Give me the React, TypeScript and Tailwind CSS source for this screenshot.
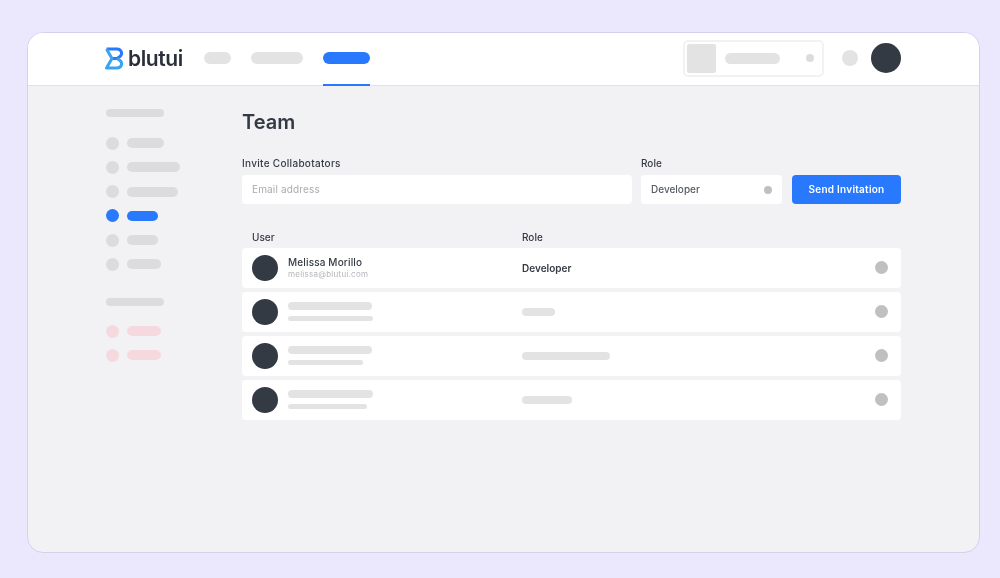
const sidebarMain = [
  { width: "w-[37px]", active: false },
  { width: "w-[53px]", active: false },
  { width: "w-[51px]", active: false },
  { width: "w-[31px]", active: true },
  { width: "w-[31px]", active: false },
  { width: "w-[34px]", active: false },
];

const rows = [
  { name: "w-[84px]", email: "w-[85px]", role: "w-[33px]" },
  { name: "w-[84px]", email: "w-[75px]", role: "w-[88px]" },
  { name: "w-[85px]", email: "w-[79px]", role: "w-[50px]" },
];

const Logo = () => (
  <svg width="18" height="23" viewBox="0 0 18 23" fill="none" strokeWidth="3" strokeLinejoin="round">
    <path d="M1.5 2H12C16.5 2 18 7 15 9.5L12 11.5H7" stroke="#2979ff" />
    <path d="M1.5 2L7 11.5L1.5 21H12C16.5 21 18 16 15 13.5L12 11.5" stroke="#38a3f1" />
  </svg>
);

const Avatar = () => <div className="size-[26px] shrink-0 rounded-full bg-[#343a44]" />;

export default function App() {
  return (
    <div className="h-[578px] w-[1000px] overflow-hidden bg-[#ebe8fd] px-[27px] pt-[32px] font-['Inter',sans-serif] blur-[0.4px]">
      <div className="flex h-[521px] w-[953px] flex-col overflow-hidden rounded-[16px] border border-[#d5d1ec] bg-[#f2f2f5]">
        {/* Header */}
        <header className="flex h-[53px] shrink-0 items-center border-b border-[#e2e2e4] bg-white pb-[2px] pl-[77px] pr-[78px]">
          <div className="flex items-center gap-[5px]">
            <Logo />
            <span className="w-[55px] text-[21px] font-semibold leading-none tracking-[-0.4px] text-[#2a2f3a]">blutui</span>
          </div>
          <div className="ml-[21px] h-[12px] w-[27px] rounded-full bg-[#e3e3e3]" />
          <div className="ml-[20px] h-[12px] w-[52px] rounded-full bg-[#e3e3e3]" />
          <div className="relative ml-[20px] h-[12px] w-[47px] rounded-full bg-[#2979ff]">
            <div className="absolute left-0 top-[32px] h-[2px] w-[47px] bg-[#2979ff]" />
          </div>
          <div className="ml-auto flex h-[37px] w-[141px] items-center rounded-[5px] border-2 border-[#f2f2f2] p-[2px]">
            <div className="size-[29px] rounded-[2px] bg-[#e3e3e3]" />
            <div className="ml-[9px] h-[11px] w-[55px] rounded-full bg-[#e3e3e3]" />
            <div className="ml-[26px] size-[8px] rounded-full bg-[#dcdcdc]" />
          </div>
          <div className="ml-[18px] size-[16px] rounded-full bg-[#e3e3e3]" />
          <div className="ml-[13px] size-[30px] rounded-full bg-[#343a44]" />
        </header>

        <div className="flex flex-1">
          {/* Sidebar */}
          <aside className="w-[214px] shrink-0 pl-[78px] pt-[23px]">
            <div className="h-[8px] w-[58px] rounded-full bg-[#dcdcdf]" />
            <div className="mt-[19.5px] flex flex-col gap-[11.3px]">
              {sidebarMain.map((item, i) => (
                <div key={i} className="flex h-[13px] items-center gap-[8px]">
                  <div className={`size-[13px] rounded-full ${item.active ? "bg-[#2979ff]" : "bg-[#dcdcdf]"}`} />
                  <div className={`h-[10px] rounded-full ${item.width} ${item.active ? "bg-[#2979ff]" : "bg-[#dcdcdf]"}`} />
                </div>
              ))}
            </div>
            <div className="mt-[27px] h-[8px] w-[58px] rounded-full bg-[#dcdcdf]" />
            <div className="mt-[19px] flex flex-col gap-[11px]">
              {[0, 1].map((i) => (
                <div key={i} className="flex h-[13px] items-center gap-[8px]">
                  <div className="size-[13px] rounded-full bg-[#f6d9de]" />
                  <div className="h-[10px] w-[34px] rounded-full bg-[#f6d9de]" />
                </div>
              ))}
            </div>
          </aside>

          {/* Main */}
          <main className="w-[659px] pt-[23px]">
            <h1 className="text-[20px] font-semibold leading-[27px] text-[#343a44]">Team</h1>

            <div className="mt-[20px] flex gap-[9px]">
              <div className="w-[390px]">
                <div className="text-[10px] font-medium leading-[14px] tracking-[0.3px] text-[#343a44]">Invite Collabotators</div>
                <div className="mt-[5px] flex h-[29px] items-center rounded-[4px] bg-white px-[10px] text-[10px] tracking-[0.15px] text-[#a9abb0]">
                  Email address
                </div>
              </div>
              <div className="w-[141px]">
                <div className="text-[10px] font-medium leading-[14px] text-[#343a44]">Role</div>
                <div className="mt-[5px] flex h-[29px] items-center justify-between rounded-[4px] bg-white px-[10px] text-[10px] font-medium text-[#555a63]">
                  Developer
                  <div className="size-[8px] rounded-full bg-[#c0c0c3]" />
                </div>
              </div>
              <div className="ml-px mt-[19px] flex h-[29px] w-[109px] items-center justify-center rounded-[4px] bg-[#2979ff] text-[10px] font-semibold tracking-[0.25px] text-white">
                Send Invitation
              </div>
            </div>

            <div className="mt-[26px] flex h-[14px] items-center pl-[10px] text-[10px] font-medium text-[#343a44]">
              <div className="w-[270px]">User</div>
              <div>Role</div>
            </div>

            <div className="mt-[4px] flex flex-col gap-[4.5px]">
              <div className="flex h-[39.5px] items-center rounded-[4px] bg-white px-[10px] pr-[13px]">
                <Avatar />
                <div className="ml-[10px] w-[234px]">
                  <div className="text-[10px] font-medium leading-[12px] tracking-[0.15px] text-[#343a44]">Melissa Morillo</div>
                  <div className="text-[8px] leading-[12px] tracking-[0.25px] text-[#b4b6ba]">melissa@blutui.com</div>
                </div>
                <div className="pt-px text-[10px] font-semibold text-[#343a44]">Developer</div>
                <div className="ml-auto size-[13px] rounded-full bg-[#c0c0c3]" />
              </div>
              {rows.map((row, i) => (
                <div key={i} className="flex h-[39.5px] items-center rounded-[4px] bg-white px-[10px] pr-[13px]">
                  <Avatar />
                  <div className="ml-[10px] flex w-[234px] flex-col gap-[6px]">
                    <div className={`h-[8px] rounded-full bg-[#e3e3e3] ${row.name}`} />
                    <div className={`h-[5px] rounded-full bg-[#e3e3e3] ${row.email}`} />
                  </div>
                  <div className={`h-[8px] rounded-full bg-[#e3e3e3] ${row.role}`} />
                  <div className="ml-auto size-[13px] rounded-full bg-[#c0c0c3]" />
                </div>
              ))}
            </div>
          </main>
        </div>
      </div>
    </div>
  );
}
